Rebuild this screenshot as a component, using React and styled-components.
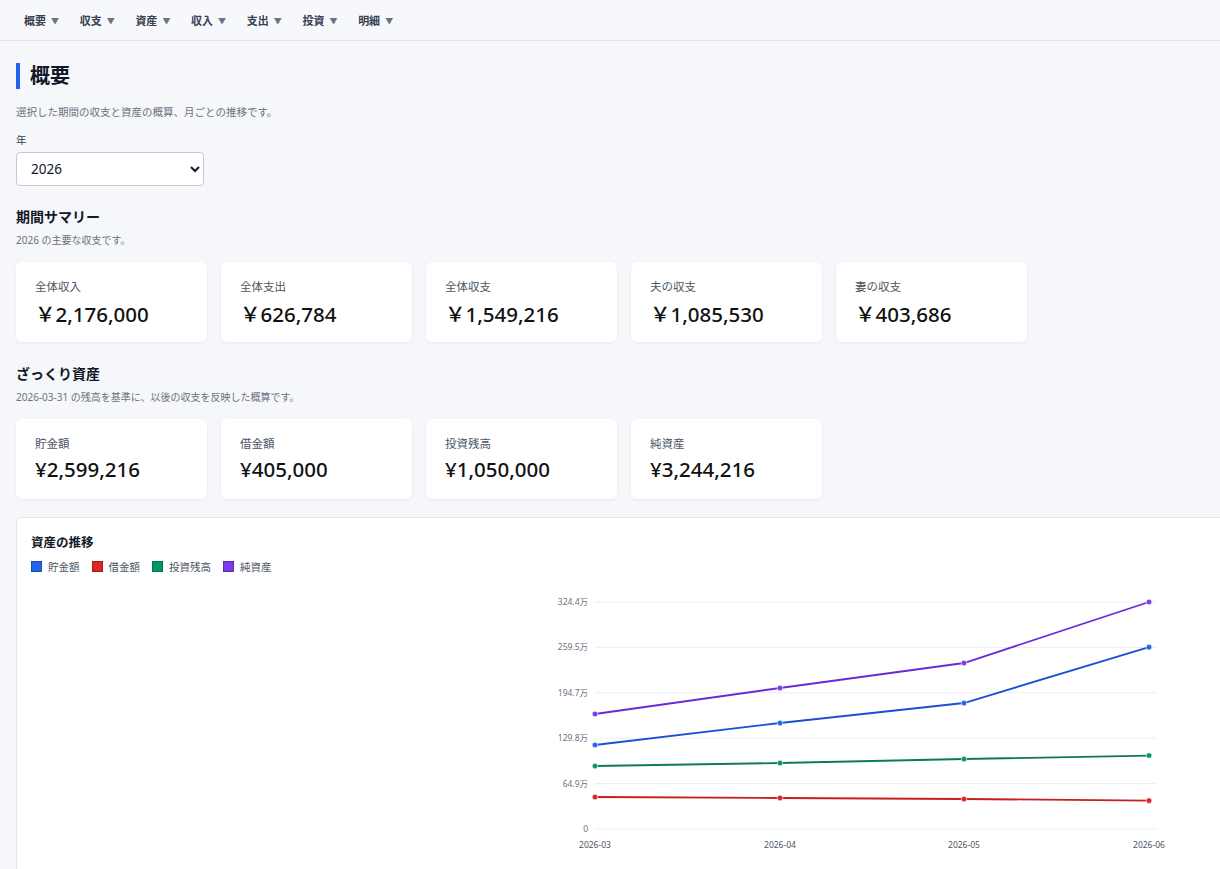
import React, { useState } from 'react'
import styled, { createGlobalStyle } from 'styled-components'

const GlobalStyle = createGlobalStyle`
  html, body { margin: 0; padding: 0; }
  body {
    background: #f5f7fb;
    font-family: "Noto Sans", "Noto Sans CJK JP", sans-serif;
    color: #111827;
    overflow-x: hidden;
  }
`

const NavBar = styled.nav`
  height: 40px;
  display: flex;
  align-items: center;
  gap: 20.7px;
  padding: 0 24px;
  border-bottom: 1px solid #e2e5ea;
  background: #f7f8fb;
`

const NavItem = styled.div`
  display: flex;
  align-items: center;
  gap: 5px;
  font-size: 11px;
  font-weight: 600;
  color: #374151;
  cursor: pointer;
`

const Caret = styled.span`
  font-size: 8px;
  color: #6b7280;
`

const Main = styled.main`
  padding: 20px 16px 0;
`

const PageTitle = styled.h1`
  margin: 2px 0 0;
  padding-left: 10px;
  border-left: 4px solid #2563eb;
  font-size: 20px;
  line-height: 26px;
  font-weight: 700;
`

const Lead = styled.p`
  margin: 15px 0 0;
  font-size: 10.5px;
  color: #6b7280;
`

const FieldLabel = styled.label`
  display: block;
  margin-top: 13px;
  font-size: 10.5px;
  color: #374151;
`

const Select = styled.select`
  margin-top: 5px;
  width: 188px;
  height: 34px;
  padding: 0 8px 0 10px;
  border: 1px solid #c4c8cf;
  border-radius: 4px;
  background: #fff;
  font-family: inherit;
  font-size: 13.5px;
  color: #111827;
`

const SectionTitle = styled.h2`
  margin: ${p => p.$top}px 0 0;
  font-size: 14px;
  line-height: 20px;
  font-weight: 700;
`

const SectionNote = styled.p`
  margin: 5px 0 0;
  font-size: 10px;
  color: #6b7280;
`

const CardRow = styled.div`
  display: flex;
  gap: 14px;
  margin-top: 15px;
`

const StatCard = styled.div`
  width: 191px;
  height: 80px;
  box-sizing: border-box;
  padding: 16px 19px 0;
  background: #fff;
  border-radius: 6px;
  box-shadow: 0 1px 3px rgba(15, 23, 42, 0.06);
`

const StatLabel = styled.div`
  font-size: 11.5px;
  color: #4b5563;
`

const StatValue = styled.div`
  margin-top: 4px;
  font-size: 20.5px;
  font-weight: 500;
  color: #111;
`

const ChartCard = styled.section`
  margin-top: 18px;
  width: 1300px;
  height: 400px;
  box-sizing: border-box;
  padding: 14px 14px 0;
  background: #fff;
  border: 1px solid #e3e6eb;
  border-radius: 6px;
`

const ChartTitle = styled.h3`
  margin: 0;
  font-size: 12.5px;
  font-weight: 700;
`

const Legend = styled.div`
  display: flex;
  gap: 12px;
  margin-top: 8px;
`

const LegendItem = styled.div`
  display: flex;
  align-items: center;
  gap: 6px;
  font-size: 10.5px;
  color: #4b5563;
`

const Swatch = styled.span`
  width: 9px;
  height: 9px;
  background: ${p => p.$color};
  border: 1px solid rgba(0, 0, 0, 0.25);
`

const ChartArea = styled.div`
  margin-top: 12px;
  padding-left: 522px;
`

const summary = [
  ['全体収入', '￥2,176,000'],
  ['全体支出', '￥626,784'],
  ['全体収支', '￥1,549,216'],
  ['夫の収支', '￥1,085,530'],
  ['妻の収支', '￥403,686'],
]

const assets = [
  ['貯金額', '¥2,599,216'],
  ['借金額', '¥405,000'],
  ['投資残高', '¥1,050,000'],
  ['純資産', '¥3,244,216'],
]

const series = [
  { name: '貯金額', color: '#1d4ed8', dot: '#2563eb', data: [1200500, 1514900, 1800700, 2599216] },
  { name: '借金額', color: '#c81e1e', dot: '#dc2626', data: [457300, 443000, 428700, 405000] },
  { name: '投資残高', color: '#0f7a52', dot: '#059669', data: [900400, 943200, 1000400, 1050000] },
  { name: '純資産', color: '#6d28d9', dot: '#7c3aed', data: [1643600, 2015100, 2372400, 3244216] },
]

const months = ['2026-03', '2026-04', '2026-05', '2026-06']
const ticks = ['0', '64.9万', '129.8万', '194.7万', '259.5万', '324.4万']

function LineChart() {
  const left = 42, right = 603, top = 16, bottom = 243
  const max = 3244216
  const xs = [42, 227, 411, 596]
  const y = v => bottom - (v / max) * (bottom - top)
  return (
    <svg width="640" height="275" style={{ display: 'block' }}>
      {ticks.map((t, i) => {
        const ty = bottom - i * (bottom - top) / 5
        return (
          <g key={t}>
            <line x1={left} x2={right} y1={ty} y2={ty} stroke="#eceef2" strokeWidth="1" />
            <text x={left - 7} y={ty + 3} textAnchor="end" fontSize="8.5" fill="#6b7280" fontFamily="Noto Sans, Noto Sans CJK JP, sans-serif">{t}</text>
          </g>
        )
      })}
      {months.map((m, i) => (
        <text key={m} x={xs[i]} y={bottom + 19} textAnchor="middle" fontSize="8.5" fill="#4b5563" fontFamily="Noto Sans, sans-serif">{m}</text>
      ))}
      {series.map(s => (
        <g key={s.name}>
          <polyline
            points={s.data.map((v, i) => `${xs[i]},${y(v)}`).join(' ')}
            fill="none"
            stroke={s.color}
            strokeWidth="1.8"
          />
          {s.data.map((v, i) => (
            <circle key={i} cx={xs[i]} cy={y(v)} r="2.8" fill={s.dot} stroke="#fff" strokeWidth="0.6" />
          ))}
        </g>
      ))}
    </svg>
  )
}

export default function App() {
  const [year, setYear] = useState('2026')
  const navs = ['概要', '収支', '資産', '収入', '支出', '投資', '明細']

  return (
    <>
      <GlobalStyle />
      <NavBar>
        {navs.map(n => (
          <NavItem key={n}>{n}<Caret>▼</Caret></NavItem>
        ))}
      </NavBar>
      <Main>
        <PageTitle>概要</PageTitle>
        <Lead>選択した期間の収支と資産の概算、月ごとの推移です。</Lead>
        <FieldLabel>年</FieldLabel>
        <Select value={year} onChange={e => setYear(e.target.value)}>
          <option value="2025">2025</option>
          <option value="2026">2026</option>
        </Select>

        <SectionTitle $top={21}>期間サマリー</SectionTitle>
        <SectionNote>2026 の主要な収支です。</SectionNote>
        <CardRow>
          {summary.map(([l, v]) => (
            <StatCard key={l}>
              <StatLabel>{l}</StatLabel>
              <StatValue>{v}</StatValue>
            </StatCard>
          ))}
        </CardRow>

        <SectionTitle $top={22}>ざっくり資産</SectionTitle>
        <SectionNote>2026-03-31 の残高を基準に、以後の収支を反映した概算です。</SectionNote>
        <CardRow>
          {assets.map(([l, v]) => (
            <StatCard key={l}>
              <StatLabel>{l}</StatLabel>
              <StatValue>{v}</StatValue>
            </StatCard>
          ))}
        </CardRow>

        <ChartCard>
          <ChartTitle>資産の推移</ChartTitle>
          <Legend>
            {series.map(s => (
              <LegendItem key={s.name}><Swatch $color={s.dot} />{s.name}</LegendItem>
            ))}
          </Legend>
          <ChartArea>
            <LineChart />
          </ChartArea>
        </ChartCard>
      </Main>
    </>
  )
}
